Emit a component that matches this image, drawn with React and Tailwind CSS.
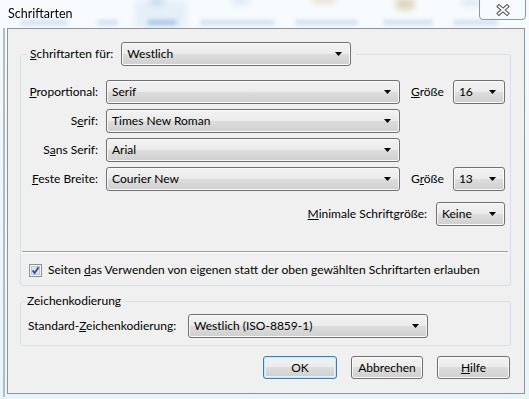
import React from "react";

function Arrow() {
  return (
    <svg width="7" height="4" viewBox="0 0 7 4" className="shrink-0">
      <path d="M0 0H7L3.5 4Z" fill="#000" />
    </svg>
  );
}

function Combo({ className, children }) {
  return (
    <div
      className={`h-[24px] rounded-[3px] border border-[#707070] bg-[linear-gradient(#f2f2f2,#ebebeb_50%,#dddddd_50%,#cfcfcf)] shadow-[inset_0_0_0_1px_#fafafa] flex items-center pl-[5px] pr-[8px] ${className}`}
    >
      <span className="flex-1 whitespace-nowrap">{children}</span>
      <Arrow />
    </div>
  );
}

function Button({ className, children }) {
  return (
    <div
      className={`h-[23px] rounded-[3px] border flex items-center justify-center bg-[linear-gradient(#f2f2f2,#ebebeb_50%,#dddddd_50%,#cfcfcf)] ${className}`}
    >
      {children}
    </div>
  );
}

function Checkbox() {
  return (
    <svg width="13" height="13" viewBox="0 0 13 13" className="shrink-0">
      <rect x="0.5" y="0.5" width="12" height="12" fill="#f6f6f6" stroke="#8e8f8f" />
      <rect x="2.5" y="2.5" width="8" height="8" fill="#dde3ee" stroke="#bfc7d6" />
      <path d="M3.6 6.4L5.6 9L9.6 3.2" fill="none" stroke="#33498f" strokeWidth="1.8" />
    </svg>
  );
}

export default function App() {
  return (
    <div className="w-[529px] h-[399px] relative overflow-hidden bg-[linear-gradient(#f8fbfd,#f1f6fa_40%,#e8f5f8)] text-[12px] leading-[16px] text-black whitespace-nowrap font-['Lato',sans-serif]">
      {/* blurred background behind glass title bar */}
      <div aria-hidden="true" className="absolute inset-x-0 top-0 h-[28px] overflow-hidden pointer-events-none">
        <div className="absolute left-[135px] top-0 w-[52px] h-[28px] bg-[#dcebf7] opacity-70 blur-[3px]" />
        <div className="absolute left-[150px] top-[-4px] w-[14px] h-[9px] rounded-full bg-[#5b8fbf] opacity-25 blur-[3px]" />
        <div className="absolute left-[232px] top-[-2px] w-[18px] h-[6px] rounded-full bg-[#6aa8d8] opacity-25 blur-[3px]" />
        <div className="absolute left-[312px] top-[-3px] w-[24px] h-[6px] rounded-full bg-[#b89a50] opacity-30 blur-[3px]" />
        <div className="absolute left-[395px] top-[-2px] w-[20px] h-[12px] rounded-full bg-[#b0904a] opacity-35 blur-[3px]" />
        <div className="absolute left-[462px] top-[-2px] w-[18px] h-[8px] rounded-full bg-[#6aa0d0] opacity-20 blur-[3px]" />
        <div className="absolute left-[20px] top-[20px] w-[48px] h-[5px] rounded-full bg-[#6f9fd6] opacity-30 blur-[2px]" />
        <div className="absolute left-[97px] top-[20px] w-[21px] h-[5px] rounded-full bg-[#6f9fd6] opacity-30 blur-[2px]" />
        <div className="absolute left-[147px] top-[20px] w-[30px] h-[5px] rounded-full bg-[#4f86c8] opacity-40 blur-[2px]" />
        <div className="absolute left-[200px] top-[20px] w-[75px] h-[5px] rounded-full bg-[#6f9fd6] opacity-30 blur-[2px]" />
        <div className="absolute left-[295px] top-[20px] w-[63px] h-[5px] rounded-full bg-[#6f9fd6] opacity-30 blur-[2px]" />
        <div className="absolute left-[383px] top-[20px] w-[50px] h-[5px] rounded-full bg-[#6f9fd6] opacity-30 blur-[2px]" />
        <div className="absolute left-[453px] top-[20px] w-[45px] h-[5px] rounded-full bg-[#6f9fd6] opacity-30 blur-[2px]" />
      </div>

      <div className="relative flex flex-col h-full pl-[3px]">
        {/* title bar */}
        <div className="h-[28px] flex items-start justify-between shrink-0">
          <div className="pl-[5px] pt-[6px] text-[12.5px] drop-shadow-[0_0_4px_#ffffff]">Schriftarten</div>
          <div className="mr-[3px] mt-[-1px] w-[47px] h-[21px] rounded-b-[4px] border border-[#8b97a3] bg-[#f7fafc]/60 flex items-center justify-center">
            <svg width="14" height="12" viewBox="0 0 14 12">
              <path d="M3 2.5L11 9.5M11 2.5L3 9.5" stroke="#5a5f66" strokeWidth="4" strokeLinecap="square" />
              <path d="M3 2.5L11 9.5M11 2.5L3 9.5" stroke="#ffffff" strokeWidth="1.8" strokeLinecap="square" />
            </svg>
          </div>
        </div>

        {/* client area */}
        <div className="flex">
          <div className="w-[2px] h-[369px] bg-[#b3bcc4]" />
          <div className="ml-[2px] w-[518px] h-[366px] border border-[#8c959e] bg-[#f0f0f0] flex flex-col">
            <fieldset className="ml-[12px] mt-[13px] w-[491px] border border-[#d5dfe5] rounded-[3px] flex flex-col pb-[7px]">
              <legend className="ml-[6px] pl-[3px] pr-[5px]">
                <div className="flex items-center">
                  <span>
                    <u>S</u>chriftarten für:
                  </span>
                  <Combo className="ml-[8px] w-[230px]">Westlich</Combo>
                </div>
              </legend>

              <div className="flex flex-col gap-[5px] mt-[14px]">
                <div className="flex items-center">
                  <div className="w-[77px] text-right">
                    <u>P</u>roportional:
                  </div>
                  <Combo className="ml-[8px] w-[294px]">Serif</Combo>
                  <div className="ml-[11px]">
                    <u>G</u>röße
                  </div>
                  <Combo className="ml-[9px] w-[52px]">16</Combo>
                </div>
                <div className="flex items-center">
                  <div className="w-[77px] text-right">
                    S<u>e</u>rif:
                  </div>
                  <Combo className="ml-[8px] w-[294px]">Times New Roman</Combo>
                </div>
                <div className="flex items-center">
                  <div className="w-[77px] text-right">
                    S<u>a</u>ns Serif:
                  </div>
                  <Combo className="ml-[8px] w-[294px]">Arial</Combo>
                </div>
                <div className="flex items-center">
                  <div className="w-[77px] text-right">
                    <u>F</u>este Breite:
                  </div>
                  <Combo className="ml-[8px] w-[294px]">Courier New</Combo>
                  <div className="ml-[11px]">
                    G<u>r</u>öße
                  </div>
                  <Combo className="ml-[9px] w-[52px]">13</Combo>
                </div>
              </div>

              <div className="flex items-center justify-end mt-[11px] pr-[5px]">
                <div>
                  <u>M</u>inimale Schriftgröße:
                </div>
                <Combo className="ml-[9px] w-[69px]">Keine</Combo>
              </div>

              <div className="mt-[25px] ml-[1px] mr-[2px] h-[2px] border-t border-b border-t-[#a0a0a0] border-b-[#ffffff]" />

              <div className="flex items-center mt-[9px] pl-[8px]">
                <Checkbox />
                <span className="ml-[6px]">
                  Seiten <u>d</u>as Verwenden von eigenen statt der oben gewählten Schriftarten erlauben
                </span>
              </div>
            </fieldset>

            <fieldset className="ml-[12px] mt-[7px] w-[491px] border border-[#d5dfe5] rounded-[3px] flex flex-col pb-[7px]">
              <legend className="ml-[4px] px-[2px]">Zeichenkodierung</legend>
              <div className="flex items-center mt-[5px] pl-[7px]">
                <div className="w-[160px]">
                  Standard-<u>Z</u>eichenkodierung:
                </div>
                <Combo className="w-[240px]">Westlich (ISO-8859-1)</Combo>
              </div>
            </fieldset>

            <div className="flex justify-end gap-[14px] mt-[10px] pr-[14px]">
              <Button className="w-[74px] border-[#3c7fb1] shadow-[inset_0_0_0_1px_#c4e8fa,inset_0_0_0_2px_#e0f3fc]">OK</Button>
              <Button className="w-[72px] border-[#707070] shadow-[inset_0_0_0_1px_#fafafa]">Abbrechen</Button>
              <Button className="w-[73px] border-[#707070] shadow-[inset_0_0_0_1px_#fafafa]">
                <span>
                  <u>H</u>ilfe
                </span>
              </Button>
            </div>
          </div>
        </div>
      </div>
    </div>
  );
}
